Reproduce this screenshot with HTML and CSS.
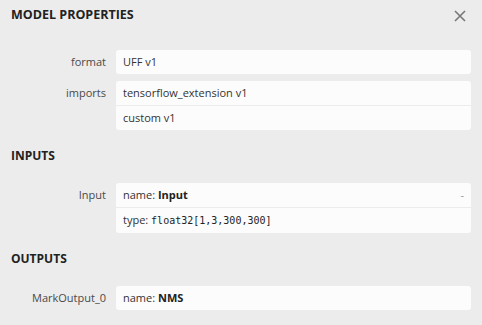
FILE: index.html
```html
<!DOCTYPE html>
<html>
<head>
<meta charset="utf-8">
<link rel="stylesheet" href="styles.css">
</head>
<body>
<div class="sidebar">
  <div class="header">
    <div class="title">MODEL PROPERTIES</div>
    <svg class="close" width="12" height="12" viewBox="0 0 12 12"><path d="M1 1 L11 11 M11 1 L1 11" stroke="#777" stroke-width="1.6" fill="none"/></svg>
  </div>
  <div class="content">
    <div class="item first">
      <div class="name">format</div>
      <div class="box"><div class="row">UFF v1</div></div>
    </div>
    <div class="item">
      <div class="name">imports</div>
      <div class="box">
        <div class="row">tensorflow_extension v1</div>
        <div class="row sep">custom v1</div>
      </div>
    </div>
    <div class="section">INPUTS</div>
    <div class="item">
      <div class="name">Input</div>
      <div class="box">
        <div class="row split"><span>name: <b>Input</b></span><span class="toggle">-</span></div>
        <div class="row sep">type: <code>float32[1,3,300,300]</code></div>
      </div>
    </div>
    <div class="section">OUTPUTS</div>
    <div class="item">
      <div class="name">MarkOutput_0</div>
      <div class="box"><div class="row">name: <b>NMS</b></div></div>
    </div>
  </div>
</div>
</body>
</html>
```
FILE: styles.css
```css
html, body {
  margin: 0;
  padding: 0;
  background: #ececec;
}
body {
  font-family: "Open Sans", "Noto Sans", sans-serif;
  font-size: 11px;
  color: #333;
  width: 482px;
  height: 325px;
  overflow: hidden;
}
.header {
  display: flex;
  justify-content: space-between;
  align-items: flex-start;
  padding: 7px 16px 0 11px;
}
.title {
  font-size: 12.5px;
  font-weight: 700;
  line-height: 16px;
  color: #222;
}
.close {
  margin-top: 3px;
}
.content {
  display: flex;
  flex-direction: column;
  padding: 0 11px;
}
.item {
  display: flex;
  margin-top: 7px;
}
.item.first {
  margin-top: 27px;
}
.name {
  width: 95px;
  padding-right: 10px;
  text-align: right;
  line-height: 24px;
  color: #4a4a4a;
  flex: none;
}
.box {
  flex: 1;
  background: #fcfcfc;
  border-radius: 3px;
}
.row {
  line-height: 24px;
  padding: 0 7px;
  white-space: nowrap;
}
.row.sep {
  border-top: 1px solid #ececec;
}
.row.split {
  display: flex;
  justify-content: space-between;
}
.toggle {
  color: #999;
}
b {
  font-weight: 700;
  color: #222;
}
code {
  font-family: "DejaVu Sans Mono", "Liberation Mono", monospace;
  font-size: 10px;
  color: #222;
}
.section {
  font-size: 12px;
  font-weight: 700;
  line-height: 16px;
  color: #222;
  margin-top: 18px;
  margin-bottom: 12px;
}
```
